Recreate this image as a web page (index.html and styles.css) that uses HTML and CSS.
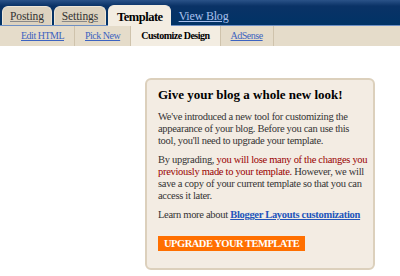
FILE: index.html
```html
<!DOCTYPE html>
<html>
<head>
    <meta charset="utf-8">
    <title>Template</title>
    <link rel="stylesheet" href="styles.css">
</head>
<body>
    <div id="topbar">
        <div class="tab">Posting</div>
        <div class="tab">Settings</div>
        <div class="tab active">Template</div>
        <a class="viewblog" href="#">View Blog</a>
    </div>
    <div id="subnav">
        <a class="sub" href="#">Edit HTML</a>
        <a class="sub" href="#">Pick New</a>
        <span class="sub current">Customize Design</span>
        <a class="sub" href="#">AdSense</a>
    </div>
    <div id="main">
        <div class="upgradebox">
            <h2>Give your blog a whole new look!</h2>
            <p>We've introduced a new tool for customizing the<br>
            appearance of your blog. Before you can use this<br>
            tool, you'll need to upgrade your template.</p>
            <p>By upgrading, <span class="warn">you will lose many of the changes you<br>
            previously made to your template.</span> However, we will<br>
            save a copy of your current template so that you can<br>
            access it later.</p>
            <p>Learn more about <a class="more" href="#">Blogger Layouts customization</a></p>
            <div class="btn">UPGRADE YOUR TEMPLATE</div>
        </div>
    </div>
</body>
</html>
```
FILE: styles.css
```css
body {
    margin: 0;
    background-color: white;
    font-family: "Liberation Serif", "Times New Roman", serif;
}

#topbar {
    height: 25px;
    background: linear-gradient(#2a5288, #0a3266 6px, #003366);
    border-bottom: 1px solid #6d8fc4;
    display: flex;
    align-items: flex-end;
    padding-left: 2px;
    gap: 2px;
}

.tab {
    height: 18px;
    padding: 0 7px;
    background-color: #dcd2bf;
    border: 1px solid #eee6d8;
    border-bottom: none;
    border-top-left-radius: 6px;
    border-top-right-radius: 6px;
    font-size: 11.5px;
    letter-spacing: -0.1px;
    line-height: 19px;
    color: #333;
    text-decoration: underline;
    text-decoration-color: #888;
}

.tab.active {
    height: 20px;
    padding: 0 7px 0 8px;
    background-color: #f3ede2;
    border-color: #f3ede2;
    color: black;
    font-size: 12.5px;
    letter-spacing: -0.5px;
    line-height: 22px;
    font-weight: bold;
    text-decoration: none;
    margin-bottom: -1px;
}

.viewblog {
    font-size: 12px;
    letter-spacing: -0.2px;
    color: #a8c0ee;
    line-height: 18px;
    margin-left: 6px;
}

#subnav {
    height: 20px;
    background-color: #e5dcca;
    display: flex;
    padding-left: 11px;
    font-size: 10px;
    letter-spacing: -0.5px;
    line-height: 20px;
}

.sub {
    padding: 0 10px;
    border-right: 1px solid #cfc3ac;
    color: #3c63c0;
}

.sub.current {
    background-color: #f3ede2;
    color: black;
    font-weight: bold;
}

#main {
    display: flex;
    padding: 32px 0 0 145px;
}

.upgradebox {
    width: 210px;
    background-color: #f3ece3;
    border: 2px solid #dcd0bc;
    border-radius: 6px;
    padding: 7px 5px 17px 11px;
    color: #333;
    font-size: 10.5px;
    letter-spacing: -0.3px;
    line-height: 12px;
    white-space: nowrap;
}

.upgradebox h2 {
    font-size: 13px;
    letter-spacing: 0;
    line-height: 15px;
    margin: 0 0 9px 0;
    color: black;
}

.upgradebox p {
    margin: 0 0 7px 0;
}

.warn {
    color: #990000;
}

.more {
    color: #2255bb;
    font-weight: bold;
}

.btn {
    display: inline-block;
    margin-top: 8px;
    background-color: #ff6f00;
    color: white;
    font-weight: bold;
    padding: 0 6px;
    font-size: 10.5px;
    letter-spacing: -0.5px;
    line-height: 15px;
}
```
